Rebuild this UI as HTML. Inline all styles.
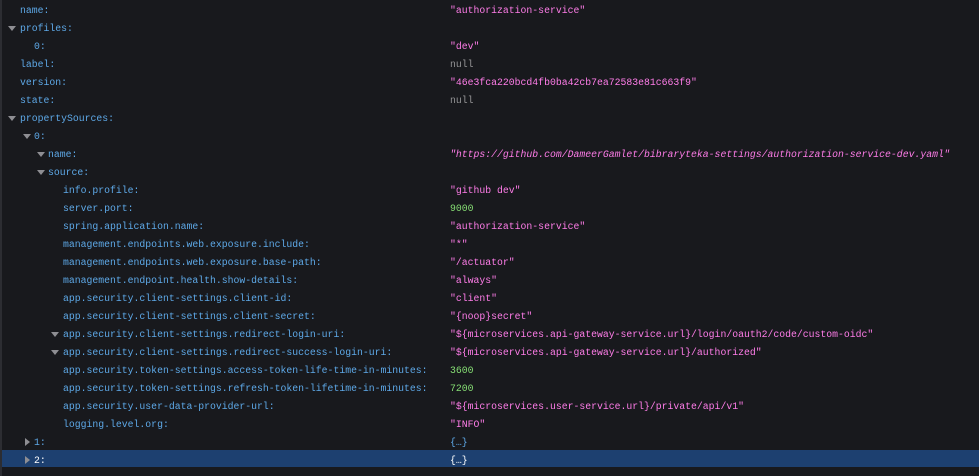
<!DOCTYPE html>
<html><head><meta charset="utf-8"><style>
body{margin:0;width:979px;height:476px;background:#18191d;overflow:hidden;font-family:"Liberation Mono",monospace;font-size:9.8px;position:relative}
.edge{position:absolute;left:0;top:0;width:2px;height:476px;background:#2c2d32}
.r{position:absolute;left:2px;right:0;height:18px;line-height:18px;white-space:pre}
.k{position:absolute;top:1.5px;color:#5ea9e8}
.v{position:absolute;top:1.5px;left:448px}
.s{color:#ff7de9}.n{color:#86de74}.nl{color:#939395}.b{color:#5ea9e8}
.t{position:absolute;top:8px;width:0;height:0;border-left:4px solid transparent;border-right:4px solid transparent;border-top:5px solid #8e8e93}
.tr{position:absolute;top:6px;width:0;height:0;border-top:4px solid transparent;border-bottom:4px solid transparent;border-left:5px solid #8e8e93}
.sel{background:#1d4070}
.sel .k{color:#fff}
</style></head><body>
<div class="edge"></div>
<div class="r" style="top:0"><span class="k" style="left:18px">name:</span><span class="v s">"authorization-service"</span></div>
<div class="r" style="top:18px"><span class="t" style="left:6px"></span><span class="k" style="left:18px">profiles:</span></div>
<div class="r" style="top:36px"><span class="k" style="left:32px">0:</span><span class="v s">"dev"</span></div>
<div class="r" style="top:54px"><span class="k" style="left:18px">label:</span><span class="v nl">null</span></div>
<div class="r" style="top:72px"><span class="k" style="left:18px">version:</span><span class="v s">"46e3fca220bcd4fb0ba42cb7ea72583e81c663f9"</span></div>
<div class="r" style="top:90px"><span class="k" style="left:18px">state:</span><span class="v nl">null</span></div>
<div class="r" style="top:108px"><span class="t" style="left:6px"></span><span class="k" style="left:18px">propertySources:</span></div>
<div class="r" style="top:126px"><span class="t" style="left:21px"></span><span class="k" style="left:32px">0:</span></div>
<div class="r" style="top:144px"><span class="t" style="left:35px"></span><span class="k" style="left:46px">name:</span><span class="v s" style="font-style:italic">"https://github.com/DameerGamlet/bibraryteka-settings/authorization-service-dev.yaml"</span></div>
<div class="r" style="top:162px"><span class="t" style="left:35px"></span><span class="k" style="left:46px">source:</span></div>
<div class="r" style="top:180px"><span class="k" style="left:61px">info.profile:</span><span class="v s">"github dev"</span></div>
<div class="r" style="top:198px"><span class="k" style="left:61px">server.port:</span><span class="v n">9000</span></div>
<div class="r" style="top:216px"><span class="k" style="left:61px">spring.application.name:</span><span class="v s">"authorization-service"</span></div>
<div class="r" style="top:234px"><span class="k" style="left:61px">management.endpoints.web.exposure.include:</span><span class="v s">"*"</span></div>
<div class="r" style="top:252px"><span class="k" style="left:61px">management.endpoints.web.exposure.base-path:</span><span class="v s">"/actuator"</span></div>
<div class="r" style="top:270px"><span class="k" style="left:61px">management.endpoint.health.show-details:</span><span class="v s">"always"</span></div>
<div class="r" style="top:288px"><span class="k" style="left:61px">app.security.client-settings.client-id:</span><span class="v s">"client"</span></div>
<div class="r" style="top:306px"><span class="k" style="left:61px">app.security.client-settings.client-secret:</span><span class="v s">"{noop}secret"</span></div>
<div class="r" style="top:324px"><span class="t" style="left:49px"></span><span class="k" style="left:61px">app.security.client-settings.redirect-login-uri:</span><span class="v s">"${microservices.api-gateway-service.url}/login/oauth2/code/custom-oidc"</span></div>
<div class="r" style="top:342px"><span class="t" style="left:49px"></span><span class="k" style="left:61px">app.security.client-settings.redirect-success-login-uri:</span><span class="v s">"${microservices.api-gateway-service.url}/authorized"</span></div>
<div class="r" style="top:360px"><span class="k" style="left:61px">app.security.token-settings.access-token-life-time-in-minutes:</span><span class="v n">3600</span></div>
<div class="r" style="top:378px"><span class="k" style="left:61px">app.security.token-settings.refresh-token-lifetime-in-minutes:</span><span class="v n">7200</span></div>
<div class="r" style="top:396px"><span class="k" style="left:61px">app.security.user-data-provider-url:</span><span class="v s">"${microservices.user-service.url}/private/api/v1"</span></div>
<div class="r" style="top:414px"><span class="k" style="left:61px">logging.level.org:</span><span class="v s">"INFO"</span></div>
<div class="r" style="top:432px"><span class="tr" style="left:23px"></span><span class="k" style="left:32px">1:</span><span class="v b">{…}</span></div>
<div class="r sel" style="top:450px;height:17px"><span class="tr" style="left:23px"></span><span class="k" style="left:32px">2:</span><span class="v" style="color:#fff">{…}</span></div>
</body></html>
